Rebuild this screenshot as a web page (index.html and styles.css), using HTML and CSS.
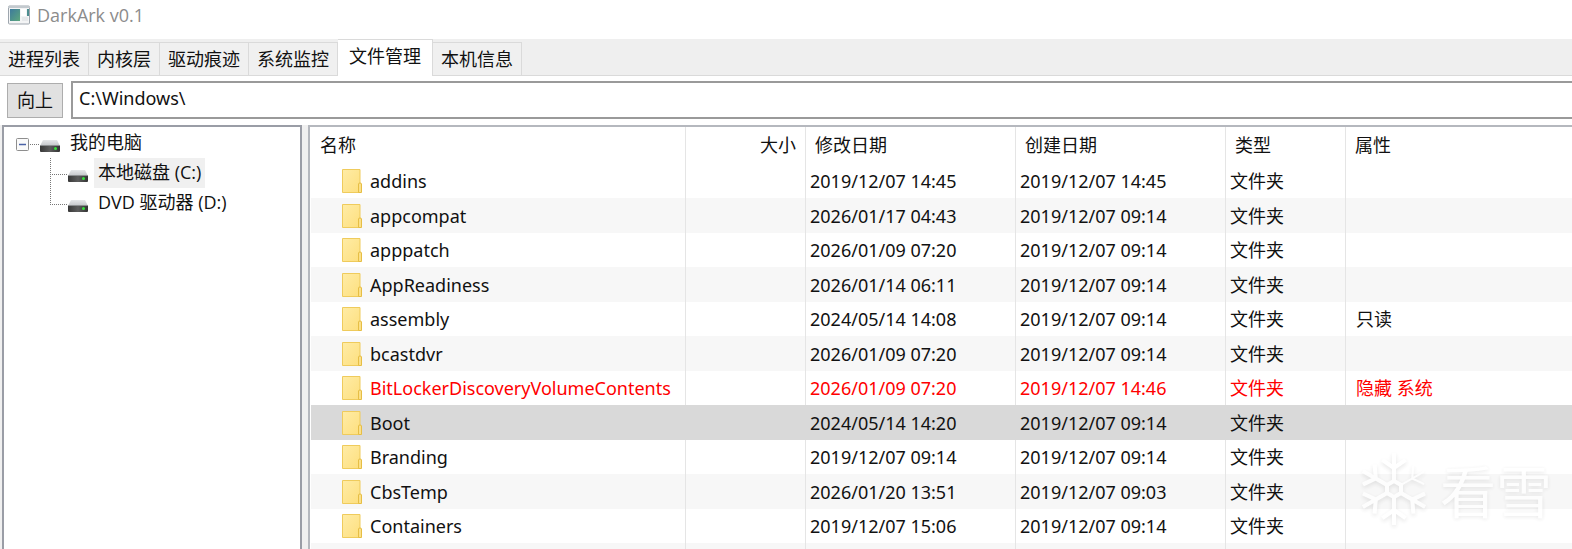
FILE: index.html
```html
<!DOCTYPE html>
<html lang="zh">
<head>
    <meta charset="UTF-8">
    <meta name="viewport" content="width=device-width, initial-scale=1.0">
    <title>DarkArk v0.1</title>
    <link rel="stylesheet" href="styles.css">
</head>
<body>
    <!-- 共用图标 -->
    <svg class="symbols" aria-hidden="true">
        <defs>
            <linearGradient id="folderFill" x1="0" y1="0" x2="1" y2="1">
                <stop offset="0" stop-color="#ffeca6"/>
                <stop offset="1" stop-color="#fddf7e"/>
            </linearGradient>
            <linearGradient id="driveTop" x1="0" y1="0" x2="0" y2="1">
                <stop offset="0" stop-color="#e6e7e9"/>
                <stop offset="1" stop-color="#c3c5c8"/>
            </linearGradient>
            <linearGradient id="driveFront" x1="0" y1="0" x2="1" y2="0">
                <stop offset="0" stop-color="#383838"/>
                <stop offset="0.5" stop-color="#5c5c5c"/>
                <stop offset="1" stop-color="#333"/>
            </linearGradient>
        </defs>
        <symbol id="folder" viewBox="0 0 20 24">
            <path d="M.5.5H18V23.500H.5Z" fill="url(#folderFill)" stroke="#efcb5c"/>
            <path d="M16.500 23.500V15q0-1 1.500-1t1.500 1V23.500Z" fill="#fbe08a" stroke="#e6be45"/>
        </symbol>
        <symbol id="drive" viewBox="0 0 20 12">
            <path d="M3 0H17L20 6H0Z" fill="url(#driveTop)"/>
            <rect y="5" width="20" height="7" rx="1" fill="url(#driveFront)"/>
            <path d="M0 5.500H20" stroke="#8d8f91"/>
            <circle cx="15.500" cy="8.500" r="1.500" fill="#35e23a"/>
        </symbol>
    </svg>

    <header class="title-bar">
        <svg class="app-icon" width="24" height="20" viewBox="0 0 24 20" aria-hidden="true">
            <defs>
                <linearGradient id="appScreen" x1="0" y1="0" x2="1" y2="1">
                    <stop offset="0" stop-color="#3d7a9c"/>
                    <stop offset="1" stop-color="#5da77d"/>
                </linearGradient>
            </defs>
            <rect x="1.500" y="1" width="21" height="18" rx="1" fill="#f3f4f5" stroke="#9ea6ae"/>
            <path d="M1 2H23" stroke="#c3c9ce" stroke-width="2"/>
            <rect x="3" y="4" width="10" height="12" fill="url(#appScreen)"/>
            <rect x="14" y="4" width="5" height="7" fill="#fff"/>
            <path d="M15 14H21" stroke="#e6e8ea" stroke-width="4"/>
            <rect x="20" y="4" width="2" height="7" fill="#4d8e90"/>
        </svg>
        <span>DarkArk v0.1</span>
    </header>

    <nav class="tabs">
        <button type="button" class="tab">进程列表</button>
        <button type="button" class="tab">内核层</button>
        <button type="button" class="tab">驱动痕迹</button>
        <button type="button" class="tab">系统监控</button>
        <button type="button" class="tab active">文件管理</button>
        <button type="button" class="tab">本机信息</button>
    </nav>

    <div class="toolbar">
        <button type="button" class="up-button">向上</button>
        <input type="text" class="path" aria-label="路径" value="C:\Windows\">
    </div>

    <main class="panes">
        <ul class="tree">
            <li>
                <svg width="26" height="30" viewBox="0 0 26 30" aria-hidden="true">
                    <rect x="2.500" y="10.500" width="12" height="12" rx="1" fill="#fafafa" stroke="#8e8e8e"/>
                    <path d="M5 16.500H12" stroke="#4b63a7" stroke-width="1.500"/>
                    <path d="M16 16.500H25" stroke="#777" stroke-dasharray="1 1"/>
                </svg>
                <svg class="drive"><use href="#drive"/></svg>
                <span class="node">我的电脑</span>
            </li>
            <li>
                <svg width="54" height="30" viewBox="0 0 54 30" aria-hidden="true">
                    <path d="M36.500 0V30M38 16.500H53" stroke="#777" stroke-dasharray="1 1"/>
                </svg>
                <svg class="drive"><use href="#drive"/></svg>
                <span class="node selected">本地磁盘 (C:)</span>
            </li>
            <li>
                <svg width="54" height="30" viewBox="0 0 54 30" aria-hidden="true">
                    <path d="M36.500 0V17M38 16.500H53" stroke="#777" stroke-dasharray="1 1"/>
                </svg>
                <svg class="drive"><use href="#drive"/></svg>
                <span class="node">DVD 驱动器 (D:)</span>
            </li>
        </ul>

        <div class="list">
            <table>
                <colgroup>
                    <col class="col-name">
                    <col class="col-size">
                    <col class="col-date">
                    <col class="col-date">
                    <col class="col-type">
                    <col>
                </colgroup>
                <thead>
                    <tr><th>名称</th><th class="size">大小</th><th>修改日期</th><th>创建日期</th><th>类型</th><th>属性</th></tr>
                </thead>
                <tbody>
                    <tr><td class="name"><svg class="folder"><use href="#folder"/></svg>addins</td><td></td><td>2019/12/07 14:45</td><td>2019/12/07 14:45</td><td>文件夹</td><td class="attr"></td></tr>
                    <tr><td class="name"><svg class="folder"><use href="#folder"/></svg>appcompat</td><td></td><td>2026/01/17 04:43</td><td>2019/12/07 09:14</td><td>文件夹</td><td class="attr"></td></tr>
                    <tr><td class="name"><svg class="folder"><use href="#folder"/></svg>apppatch</td><td></td><td>2026/01/09 07:20</td><td>2019/12/07 09:14</td><td>文件夹</td><td class="attr"></td></tr>
                    <tr><td class="name"><svg class="folder"><use href="#folder"/></svg>AppReadiness</td><td></td><td>2026/01/14 06:11</td><td>2019/12/07 09:14</td><td>文件夹</td><td class="attr"></td></tr>
                    <tr><td class="name"><svg class="folder"><use href="#folder"/></svg>assembly</td><td></td><td>2024/05/14 14:08</td><td>2019/12/07 09:14</td><td>文件夹</td><td class="attr">只读</td></tr>
                    <tr><td class="name"><svg class="folder"><use href="#folder"/></svg>bcastdvr</td><td></td><td>2026/01/09 07:20</td><td>2019/12/07 09:14</td><td>文件夹</td><td class="attr"></td></tr>
                    <tr class="hidden-item"><td class="name"><svg class="folder"><use href="#folder"/></svg>BitLockerDiscoveryVolumeContents</td><td></td><td>2026/01/09 07:20</td><td>2019/12/07 14:46</td><td>文件夹</td><td class="attr">隐藏 系统</td></tr>
                    <tr class="current"><td class="name"><svg class="folder"><use href="#folder"/></svg>Boot</td><td></td><td>2024/05/14 14:20</td><td>2019/12/07 09:14</td><td>文件夹</td><td class="attr"></td></tr>
                    <tr><td class="name"><svg class="folder"><use href="#folder"/></svg>Branding</td><td></td><td>2019/12/07 09:14</td><td>2019/12/07 09:14</td><td>文件夹</td><td class="attr"></td></tr>
                    <tr><td class="name"><svg class="folder"><use href="#folder"/></svg>CbsTemp</td><td></td><td>2026/01/20 13:51</td><td>2019/12/07 09:03</td><td>文件夹</td><td class="attr"></td></tr>
                    <tr><td class="name"><svg class="folder"><use href="#folder"/></svg>Containers</td><td></td><td>2019/12/07 15:06</td><td>2019/12/07 09:14</td><td>文件夹</td><td class="attr"></td></tr>
                    <tr><td class="name"><svg class="folder"><use href="#folder"/></svg></td><td></td><td></td><td></td><td></td><td class="attr"></td></tr>
                </tbody>
            </table>
        </div>
    </main>

    <!-- 水印 -->
    <div class="watermark">
        <svg width="64" height="72" viewBox="-32 -36 64 72" aria-hidden="true">
            <defs>
                <g id="arm">
                    <path d="M0-8V-34M0-21L-10-28M0-21L10-28"/>
                </g>
            </defs>
            <g fill="none" stroke="#fff" stroke-width="4" stroke-linecap="square">
                <path d="M0-8L7-4V4L0 8L-7 4V-4Z"/>
                <use href="#arm"/>
                <g stroke-width="2" stroke-dasharray="3 1"><use href="#arm" transform="rotate(60)"/></g>
                <use href="#arm" transform="rotate(120)"/>
                <use href="#arm" transform="rotate(180)"/>
                <use href="#arm" transform="rotate(240)"/>
                <use href="#arm" transform="rotate(300)"/>
            </g>
        </svg>
        <span>看雪</span>
    </div>
</body>
</html>
```
FILE: styles.css
```css
* {
    box-sizing: border-box;
}
body {
    display: flex;
    flex-direction: column;
    height: 100vh;
    margin: 0;
    overflow: hidden;
    background: #fff;
    color: #111;
    font-family: "Noto Sans", "Noto Sans CJK SC", sans-serif;
    font-size: 18px;
    line-height: 24px;
}
button, input {
    font: inherit;
    color: inherit;
}
.symbols {
    position: absolute;
    width: 0;
    height: 0;
}

/* 标题栏 */
.title-bar {
    display: flex;
    align-items: center;
    gap: 6px;
    height: 39px;
    padding: 0 7px 9px;
    color: #8c8c8c;
    font-family: "Open Sans", sans-serif;
}

/* 选项卡 */
.tabs {
    display: flex;
    align-items: flex-end;
    height: 37px;
    background: #efefef;
    border-bottom: 1px solid #dadada;
}
.tab {
    height: 33px;
    padding: 0 8px;
    background: #f0f0f0;
    border: 1px solid #dadada;
    border-width: 1px 1px 0 0;
    white-space: nowrap;
}
.tab.active {
    height: 37px;
    margin-bottom: -1px;
    padding: 0 11px 5px;
    background: #fff;
}

/* 路径栏 */
.toolbar {
    display: flex;
    align-items: center;
    gap: 8px;
    height: 49px;
    padding: 0 0 1px 7px;
}
.up-button {
    height: 35px;
    padding: 0 9px;
    background: #e1e1e1;
    border: 1px solid #adadad;
}
.path {
    flex: 1;
    height: 38px;
    padding: 0 6px 4px;
    background: #fff;
    border: 2px solid #9a9a9a;
    border-right: 0;
}

/* 左右面板 */
.panes {
    display: flex;
    flex: 1;
    gap: 6px;
    min-height: 0;
    padding-left: 2px;
    background: #f0f0f0;
}
.tree {
    flex: none;
    width: 300px;
    margin: 0;
    padding: 1px 0 0 10px;
    list-style: none;
    background: #fff;
    border: 2px solid #9a9da6;
    border-bottom: 0;
    font-family: "Open Sans", "Noto Sans CJK SC", sans-serif;
}
.tree li {
    display: flex;
    height: 30px;
}
.drive {
    width: 20px;
    height: 12px;
    margin-top: 12px;
}
.node {
    margin-left: 6px;
    padding: 0 4px;
    line-height: 28px;
}
.node.selected {
    background: #f0f0f0;
}
.list {
    flex: 1;
    min-width: 0;
    padding-left: 1px;
    overflow: hidden;
    background: #fff;
    border: 2px solid #b5b8be;
    border-width: 2px 0 0 2px;
}

table {
    width: 100%;
    table-layout: fixed;
    border-collapse: separate;
    border-spacing: 0;
}
.col-name {
    width: 375px;
}
.col-size, .col-type {
    width: 120px;
}
.col-date {
    width: 210px;
}
th, td {
    height: 34px;
    padding: 0 4px;
    border-right: 1px solid #e5e5e5;
    text-align: left;
    white-space: nowrap;
}
th:last-child, td:last-child {
    border-right: 0;
}
th {
    height: 37px;
    padding: 0 9px 2px;
    font-weight: normal;
}
th.size {
    text-align: right;
}
tbody tr:nth-child(even) td {
    height: 35px;
    background: #f7f7f7;
}
td.name {
    padding-left: 31px;
}
td.attr {
    padding-left: 10px;
}
.folder {
    width: 20px;
    height: 24px;
    margin: -4px 8px -4px 0;
    vertical-align: -1px;
}
.hidden-item {
    color: #f00;
}
tbody tr.current td {
    background: #d9d9d9;
    border-color: #d9d9d9;
}

.watermark {
    position: absolute;
    right: 20px;
    bottom: 24px;
    display: flex;
    align-items: center;
    gap: 14px;
    color: #fff;
    font-family: "Noto Sans CJK SC", sans-serif;
    font-size: 56px;
    line-height: 72px;
    text-shadow: 0 1px 4px rgba(0,0,0,0.12);
    opacity: 0.8;
    pointer-events: none;
}
.watermark svg {
    filter: drop-shadow(0 2px 2px rgba(0,0,0,0.12));
}
```
